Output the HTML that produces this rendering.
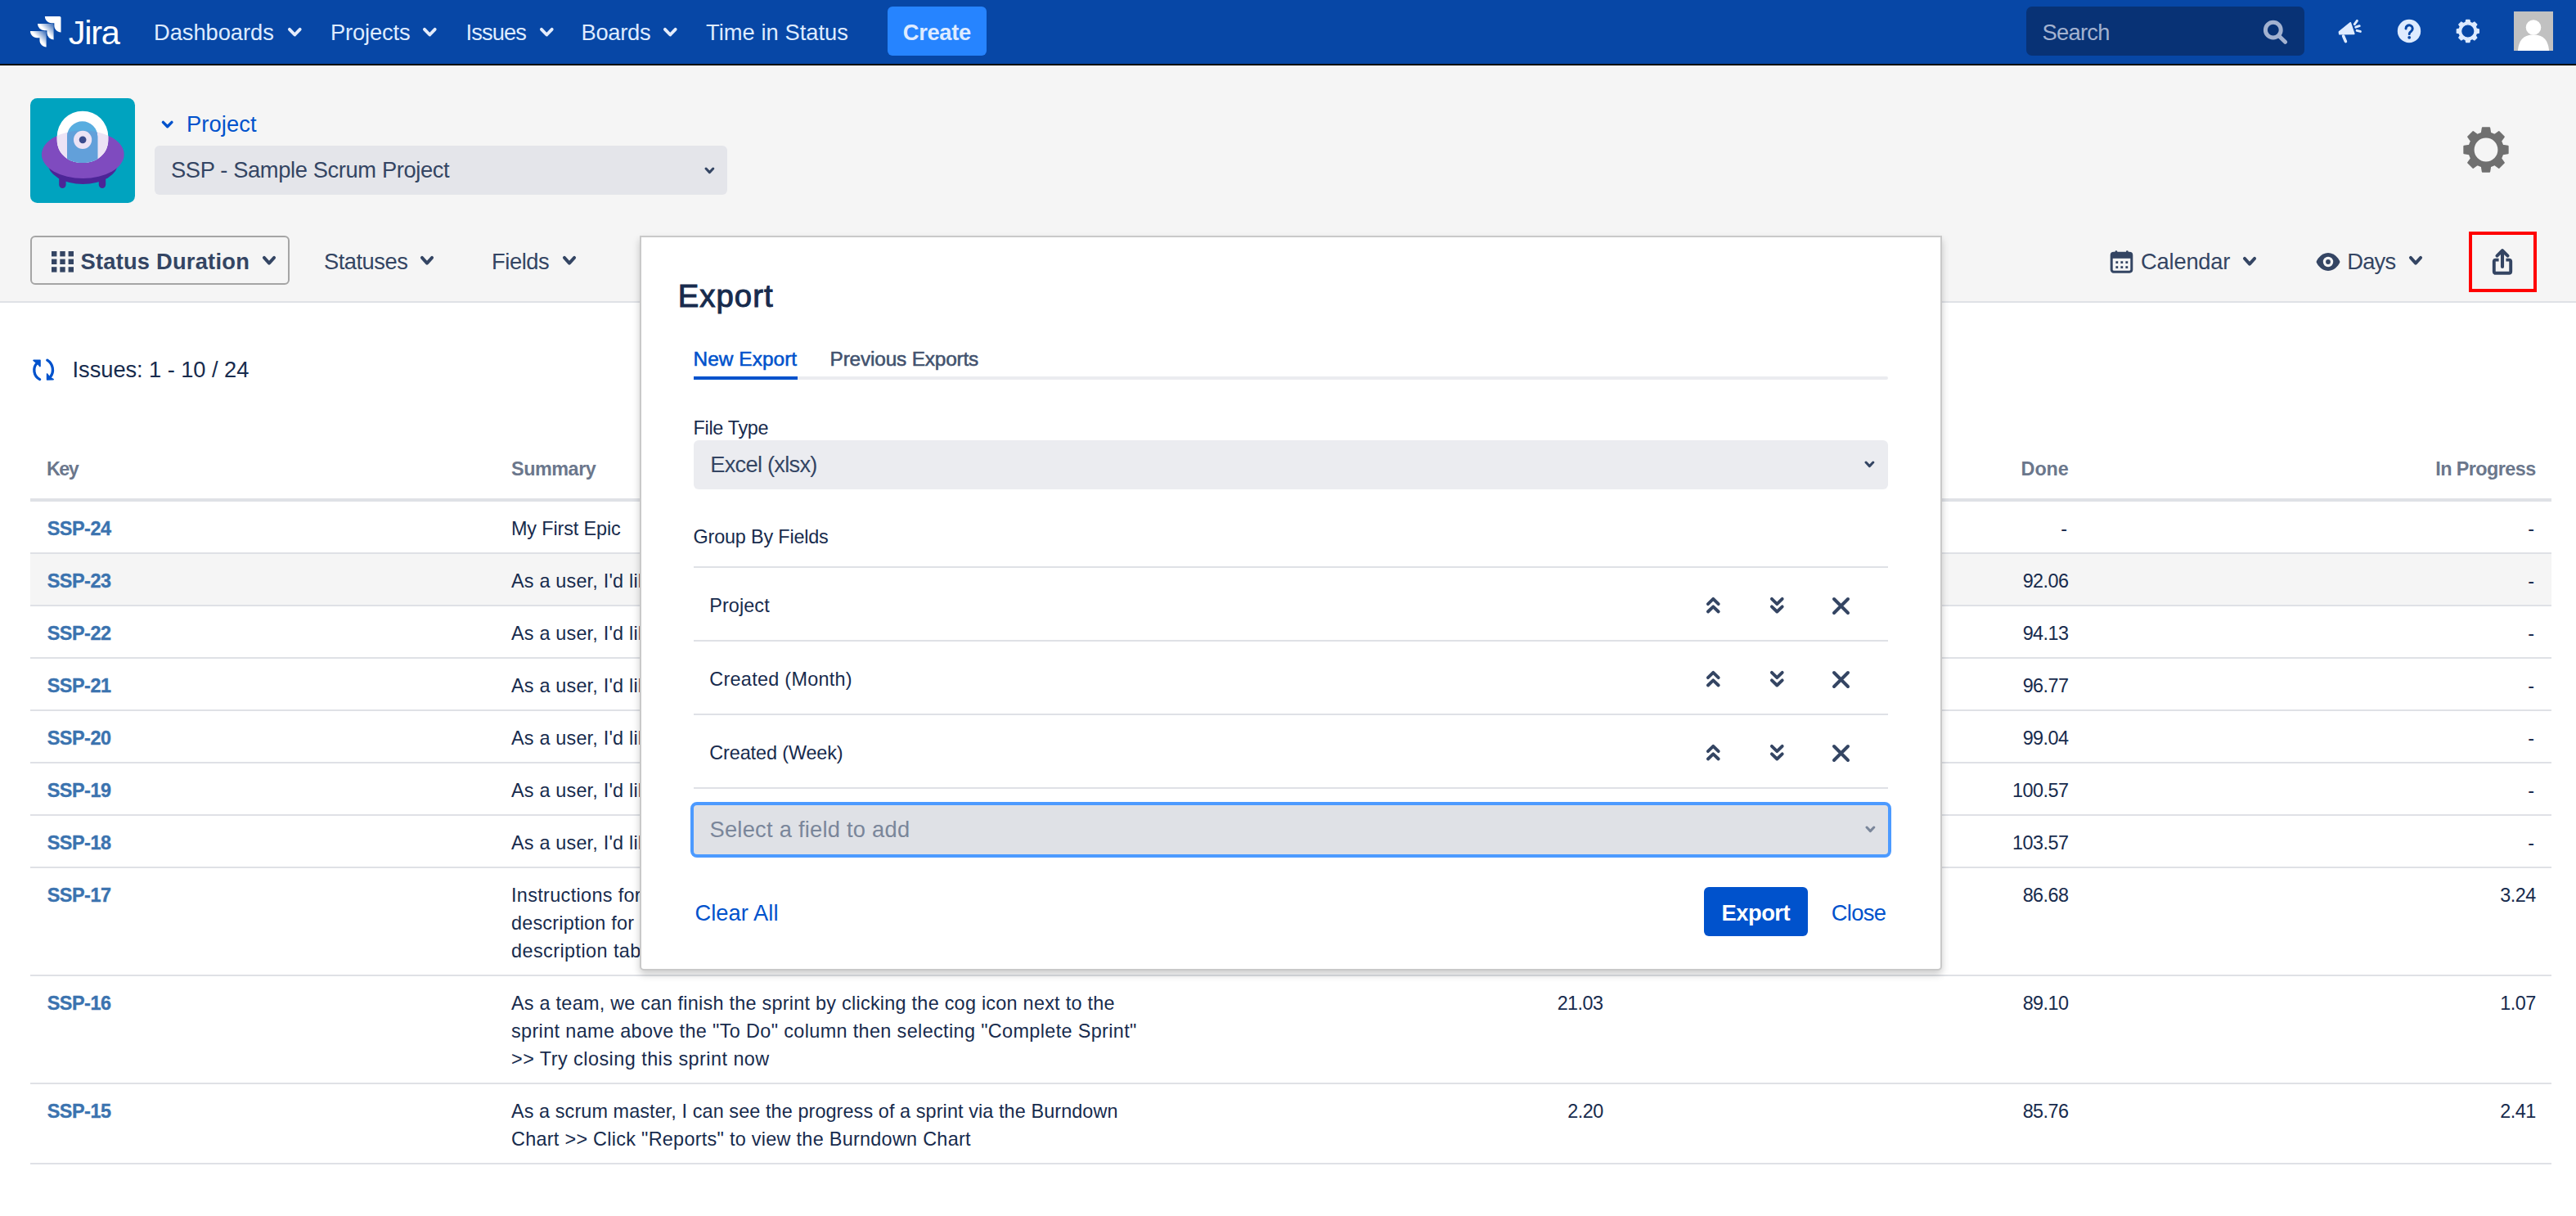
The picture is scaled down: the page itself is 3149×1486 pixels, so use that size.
<!DOCTYPE html>
<html lang="en">
<head>
<meta charset="utf-8">
<title>Time in Status - Jira</title>
<style>
*{box-sizing:border-box;margin:0;padding:0}
html,body{width:3149px;height:1486px;overflow:hidden;background:#fff}
body{position:relative;font-family:"Liberation Sans",sans-serif;color:#172b4d;font-size:24px;-webkit-font-smoothing:antialiased}
a{text-decoration:none;color:inherit}
.a{position:absolute;white-space:pre}
.ic{position:absolute;display:block;overflow:visible}
span{white-space:pre}

.nav{position:absolute;left:0;top:0;width:3149px;height:80px;background:#0747a6;border-bottom:2px solid #000}
.create{position:absolute;left:1084.5px;top:8px;width:121.5px;height:60px;background:#2684ff;border-radius:6px}
.search{position:absolute;left:2477px;top:8px;width:340px;height:60px;background:#083275;border-radius:7px}
.uav{position:absolute;left:3073px;top:14px;width:48px;height:48px}
.hdr{position:absolute;left:0;top:80px;width:3149px;height:290px;background:#f5f5f5;border-bottom:2px solid #dfe1e6}
.hdr>*{margin-top:-80px}
.psel{position:absolute;left:189px;top:178px;width:700px;height:60px;background:#e4e5ea;border-radius:6px}
.sdbtn{position:absolute;left:37px;top:288px;width:317px;height:60px;border:2px solid #a5a5a5;border-radius:6px;background:#f5f5f5}
.redbox{position:absolute;left:3018px;top:283px;width:83px;height:74px;border:4px solid #ff0000}
.grid{position:absolute;left:37px;top:545px;width:3082px;table-layout:fixed;border-collapse:collapse;font-size:23.4px;line-height:34px}
.grid th{height:66px;padding:10.5px 20px 0;vertical-align:top;text-align:left;border-bottom:4px solid #dfe1e6;color:#6b778c;font-weight:400}
.grid td{padding:16px 20px 12px;vertical-align:top;border-bottom:2px solid #dfe1e6;color:#172b4d}
.grid .n{text-align:right;padding-right:19.4px}
.grid .k{padding-left:20.7px}
.grid .k a{color:#3b73af}
.grid tr.hov td{background:#f5f5f5}
.modal{position:absolute;left:782px;top:288px;width:1592px;height:898px;background:#fff;border:2px solid #c9c9c9;border-radius:0 0 5px 5px;box-shadow:0 5px 10px rgba(0,0,0,.2)}
.tabline{position:absolute;left:848px;top:460px;width:1460px;height:4px;background:#ebecf0;border-radius:2px}
.tabsel{position:absolute;left:848px;top:460px;width:127px;height:4px;background:#0052cc}
.sel1{position:absolute;left:848px;top:538px;width:1460px;height:60px;background:#ebecf0;border-radius:6px}
.hl{position:absolute;left:848px;width:1460px;height:2px;background:#dfe1e6}
.sel2{position:absolute;left:844px;top:980px;width:1468px;height:68px;background:#dfe1e6;border:4px solid #4c9aff;border-radius:8px}
.expbtn{position:absolute;left:2083px;top:1084px;width:127px;height:60px;background:#0052cc;border-radius:6px}
h2{font-weight:400}
.modal>*{margin-left:-784px;margin-top:-290px}
</style>
</head>
<body>

<nav class="nav">
<svg class="ic" style="left:37px;top:20px" width="37.5" height="37.5" viewBox="2 2 20 20">
<defs>
<linearGradient id="jg1" x1="100%" y1="2%" x2="52%" y2="48%"><stop offset="0.15" stop-color="#fff" stop-opacity="0.3"/><stop offset="1" stop-color="#fff"/></linearGradient>
</defs>
<path fill="#fff" d="M11.53 2c0 2.4 1.97 4.35 4.35 4.35h1.78v1.7c0 2.4 1.94 4.34 4.34 4.35V2.84a.84.84 0 0 0-.84-.84h-9.63z"/>
<path fill="url(#jg1)" d="M6.77 6.8a4.362 4.362 0 0 0 4.34 4.34h1.8v1.72a4.362 4.362 0 0 0 4.34 4.34V7.63a.841.841 0 0 0-.83-.83H6.77z"/>
<path fill="url(#jg1)" d="M2 11.6c0 2.4 1.95 4.34 4.35 4.34h1.78v1.72c.01 2.39 1.95 4.33 4.34 4.34v-9.57a.84.84 0 0 0-.84-.84L2 11.6z"/>
</svg>
<div class="a" style="left:83.8px;top:18.5px;line-height:41.5px;color:#fff;"><span style="font-size:41.5px;font-weight:400;letter-spacing:-1.27px">Jira</span></div>
<a class="a" style="left:188.0px;top:26.2px;line-height:27.3px;color:#deebff;"><span style="font-size:27.3px;font-weight:400;letter-spacing:-0.04px">Dashboards</span></a><svg class="ic" style="left:349.7px;top:31.5px" width="20.6" height="14.4" viewBox="0 0 20.6 14.4"><path d="M3.9 3.9 L10.30 10.5 L16.7 3.9" fill="none" stroke="#e4ecfb" stroke-opacity="1" stroke-width="3.9" stroke-linecap="round" stroke-linejoin="round"/></svg>
<a class="a" style="left:404.0px;top:26.2px;line-height:27.3px;color:#deebff;"><span style="font-size:27.3px;font-weight:400;letter-spacing:-0.13px">Projects</span></a><svg class="ic" style="left:515.2px;top:31.5px" width="20.6" height="14.4" viewBox="0 0 20.6 14.4"><path d="M3.9 3.9 L10.30 10.5 L16.7 3.9" fill="none" stroke="#e4ecfb" stroke-opacity="1" stroke-width="3.9" stroke-linecap="round" stroke-linejoin="round"/></svg>
<a class="a" style="left:569.5px;top:26.2px;line-height:27.3px;color:#deebff;"><span style="font-size:27.3px;font-weight:400;letter-spacing:-0.89px">Issues</span></a><svg class="ic" style="left:657.7px;top:31.5px" width="20.6" height="14.4" viewBox="0 0 20.6 14.4"><path d="M3.9 3.9 L10.30 10.5 L16.7 3.9" fill="none" stroke="#e4ecfb" stroke-opacity="1" stroke-width="3.9" stroke-linecap="round" stroke-linejoin="round"/></svg>
<a class="a" style="left:710.5px;top:26.2px;line-height:27.3px;color:#deebff;"><span style="font-size:27.3px;font-weight:400;letter-spacing:-0.29px">Boards</span></a><svg class="ic" style="left:809.2px;top:31.5px" width="20.6" height="14.4" viewBox="0 0 20.6 14.4"><path d="M3.9 3.9 L10.30 10.5 L16.7 3.9" fill="none" stroke="#e4ecfb" stroke-opacity="1" stroke-width="3.9" stroke-linecap="round" stroke-linejoin="round"/></svg>
<a class="a" style="left:863.0px;top:26.2px;line-height:27.3px;color:#deebff;"><span style="font-size:27.3px;font-weight:400;letter-spacing:0.04px">Time in Status</span></a>
<a class="create"></a>
<div class="a" style="left:1103.8px;top:26.1px;line-height:27.3px;color:#deebff;"><span style="font-size:27.3px;font-weight:700;letter-spacing:-0.33px">Create</span></div>
<div class="search"></div>
<div class="a" style="left:2496.5px;top:26.2px;line-height:27.3px;color:#a3b2d0;"><span style="font-size:27.3px;font-weight:400;letter-spacing:-0.71px">Search</span></div>
<svg class="ic" style="left:2760px;top:20px" width="40" height="40" viewBox="0 0 40 40"><circle cx="18.8" cy="16.7" r="9.4" fill="none" stroke="#a3b2d0" stroke-width="5"/><path d="M26 24 L33.5 31.3" stroke="#a3b2d0" stroke-width="5" stroke-linecap="round"/></svg>
<svg class="ic" style="left:2850px;top:20px" width="40" height="40" viewBox="2850 20 40 40" fill="#deebff" stroke="#deebff">
<path d="M2859.6 39 L2873.2 28 L2877.6 41.2 L2860 41.6 Z" stroke-width="2" stroke-linejoin="round"/>
<path d="M2864.6 44 L2867.4 50.6" stroke-width="3.6" stroke-linecap="round"/>
<path d="M2878.3 29.6 L2881.4 25.4 M2879.8 33.2 L2884.2 31.7 M2881.2 37.4 L2885.4 38.4" stroke-width="3" stroke-linecap="round"/>
</svg>
<svg class="ic" style="left:2930px;top:23px" width="30" height="30" viewBox="0 0 30 30"><circle cx="15" cy="15" r="14.2" fill="#deebff"/><path d="M11 11.9 a4.1 4.1 0 1 1 6.5 3.3 c-1.6 1.1 -2.3 1.8 -2.3 3.4" fill="none" stroke="#0747a6" stroke-width="3" stroke-linecap="round"/><circle cx="15.2" cy="22.8" r="1.9" fill="#0747a6"/></svg>
<svg class="ic" style="left:3001px;top:22px" width="32" height="32" viewBox="0 0 32 32"><path fill="#deebff" fill-rule="evenodd" stroke="#deebff" stroke-width="1.2" stroke-linejoin="round" d="M12.98 5.37 L13.66 2.47 L17.94 2.47 L18.62 5.37 L21.32 6.49 L23.85 4.92 L26.88 7.95 L25.31 10.48 L26.43 13.18 L29.33 13.86 L29.33 18.14 L26.43 18.82 L25.31 21.52 L26.88 24.05 L23.85 27.08 L21.32 25.51 L18.62 26.63 L17.94 29.53 L13.66 29.53 L12.98 26.63 L10.28 25.51 L7.75 27.08 L4.72 24.05 L6.29 21.52 L5.17 18.82 L2.27 18.14 L2.27 13.86 L5.17 13.18 L6.29 10.48 L4.72 7.95 L7.75 4.92 L10.28 6.49Z M7.60 16.00 a8.2 8.2 0 1 0 16.4 0 a8.2 8.2 0 1 0 -16.4 0Z"/></svg>
<div class="uav"><svg width="48" height="48" viewBox="0 0 48 48"><rect width="48" height="48" fill="#c1c1c1"/><circle cx="24" cy="19.5" r="9.3" fill="#fff"/><path d="M5 48 C6 33 14 28.5 24 28.5 C34 28.5 42 33 43 48 Z" fill="#fff"/></svg></div>
</nav>

<header class="hdr">
<svg class="ic" style="left:37px;top:120px" width="128" height="128" viewBox="0 0 128 128">
<defs>
<clipPath id="dome"><path d="M32.7 47 A31.3 31.3 0 0 1 95.3 47 L95.3 51 C95.3 69 80 79 64 79 C48 79 32.7 69 32.7 51 Z"/></clipPath>
<clipPath id="sau"><ellipse cx="64.3" cy="68.7" rx="50.4" ry="29.3"/></clipPath>
</defs>
<rect width="128" height="128" rx="8.5" fill="#00a3bf"/>
<rect x="35.2" y="90" width="8.4" height="19.9" rx="4.2" fill="#4c2597"/>
<rect x="83.8" y="90" width="8.4" height="19.9" rx="4.2" fill="#4c2597"/>
<ellipse cx="64.3" cy="79" rx="43" ry="26" fill="#4c2597"/>
<ellipse cx="64.3" cy="68.7" rx="50.4" ry="29.3" fill="#7f4bbf"/>
<g clip-path="url(#dome)">
<rect x="30" y="10" width="70" height="72" fill="#fff"/>
<g clip-path="url(#sau)"><rect x="30" y="10" width="70" height="72" fill="#ece3f5"/></g>
<path d="M45 82 V47 A18.6 18.6 0 0 1 82.3 47 V82 Z" fill="#58ade0"/>
<g clip-path="url(#sau)"><path d="M45 82 V47 A18.6 18.6 0 0 1 82.3 47 V82 Z" fill="#62a0da"/></g>
</g>
<circle cx="64.1" cy="50.8" r="11.1" fill="#ece3f5"/>
<circle cx="64.1" cy="50.8" r="4.4" fill="#3b4c8e"/>
</svg>
<svg class="ic" style="left:196.1px;top:145.9px" width="17.4" height="12.2" viewBox="0 0 17.4 12.2"><path d="M3.4 3.4 L8.70 8.8 L14.0 3.4" fill="none" stroke="#0052cc" stroke-opacity="1" stroke-width="3.4" stroke-linecap="round" stroke-linejoin="round"/></svg>
<a class="a" style="left:228.0px;top:138.4px;line-height:27.3px;color:#0052cc;"><span style="font-size:27.3px;font-weight:400;letter-spacing:0.10px">Project</span></a>
<div class="psel"></div>
<div class="a" style="left:209.0px;top:194.4px;line-height:27.3px;color:#344563;"><span style="font-size:27.3px;font-weight:400;letter-spacing:-0.37px">SSP - Sample Scrum Project</span></div>
<svg class="ic" style="left:859.6px;top:202.5px" width="14.8" height="10.6" viewBox="0 0 14.8 10.6"><path d="M3.0 3.0 L7.40 7.6 L11.8 3.0" fill="none" stroke="#344563" stroke-opacity="1" stroke-width="3" stroke-linecap="round" stroke-linejoin="round"/></svg>
<svg class="ic" style="left:3009px;top:153px" width="60" height="60" viewBox="0 0 60 60"><path fill="#707070" fill-rule="evenodd" stroke="#707070" stroke-width="2" stroke-linejoin="round" d="M24.78 9.66 L25.78 3.33 L34.22 3.33 L35.22 9.66 L40.69 11.92 L45.87 8.16 L51.84 14.13 L48.08 19.31 L50.34 24.78 L56.67 25.78 L56.67 34.22 L50.34 35.22 L48.08 40.69 L51.84 45.87 L45.87 51.84 L40.69 48.08 L35.22 50.34 L34.22 56.67 L25.78 56.67 L24.78 50.34 L19.31 48.08 L14.13 51.84 L8.16 45.87 L11.92 40.69 L9.66 35.22 L3.33 34.22 L3.33 25.78 L9.66 24.78 L11.92 19.31 L8.16 14.13 L14.13 8.16 L19.31 11.92Z M14.60 30.00 a15.4 15.4 0 1 0 30.8 0 a15.4 15.4 0 1 0 -30.8 0Z"/></svg>

<div class="sdbtn"></div>
<svg class="ic" style="left:62.5px;top:306.5px" width="27" height="26" viewBox="0 0 27 26" fill="#344563"><rect x="0" y="0" width="6.4" height="6.4"/><rect x="10.3" y="0" width="6.4" height="6.4"/><rect x="20.6" y="0" width="6.4" height="6.4"/><rect x="0" y="9.6" width="6.4" height="6.4"/><rect x="10.3" y="9.6" width="6.4" height="6.4"/><rect x="20.6" y="9.6" width="6.4" height="6.4"/><rect x="0" y="19.2" width="6.4" height="6.4"/><rect x="10.3" y="19.2" width="6.4" height="6.4"/><rect x="20.6" y="19.2" width="6.4" height="6.4"/></svg>
<div class="a" style="left:98.5px;top:305.9px;line-height:27.3px;color:#344563;"><span style="font-size:27.3px;font-weight:700;letter-spacing:0.22px">Status Duration</span></div>
<svg class="ic" style="left:318.5px;top:310.8px" width="20.0" height="14.5" viewBox="0 0 20.0 14.5"><path d="M3.9 3.9 L10.00 10.6 L16.1 3.9" fill="none" stroke="#344563" stroke-opacity="1" stroke-width="3.9" stroke-linecap="round" stroke-linejoin="round"/></svg>
<div class="a" style="left:396.0px;top:305.9px;line-height:27.3px;color:#344563;"><span style="font-size:27.3px;font-weight:400;letter-spacing:-0.49px">Statuses</span></div><svg class="ic" style="left:511.5px;top:311.2px" width="20.0" height="14.5" viewBox="0 0 20.0 14.5"><path d="M3.9 3.9 L10.00 10.6 L16.1 3.9" fill="none" stroke="#344563" stroke-opacity="1" stroke-width="3.9" stroke-linecap="round" stroke-linejoin="round"/></svg>
<div class="a" style="left:601.0px;top:305.9px;line-height:27.3px;color:#344563;"><span style="font-size:27.3px;font-weight:400;letter-spacing:-0.43px">Fields</span></div><svg class="ic" style="left:685.5px;top:311.2px" width="20.0" height="14.5" viewBox="0 0 20.0 14.5"><path d="M3.9 3.9 L10.00 10.6 L16.1 3.9" fill="none" stroke="#344563" stroke-opacity="1" stroke-width="3.9" stroke-linecap="round" stroke-linejoin="round"/></svg>

<svg class="ic" style="left:2579px;top:305px" width="29" height="29" viewBox="0 0 29 29"><rect x="2.2" y="4.2" width="24.6" height="23" rx="2.6" fill="none" stroke="#344563" stroke-width="3"/><rect x="2.2" y="4.2" width="24.6" height="6.6" fill="#344563"/><rect x="6.6" y="1.2" width="2.6" height="6" rx="1" fill="#344563"/><rect x="20" y="1.2" width="2.6" height="6" rx="1" fill="#344563"/><g fill="#344563"><rect x="7.4" y="14.2" width="2.8" height="2.8"/><rect x="13.4" y="14.2" width="2.8" height="2.8"/><rect x="19.4" y="14.2" width="2.8" height="2.8"/><rect x="7.4" y="20.2" width="2.8" height="2.8"/><rect x="13.4" y="20.2" width="2.8" height="2.8"/><rect x="19.4" y="20.2" width="2.8" height="2.8"/></g></svg>
<div class="a" style="left:2617.0px;top:305.9px;line-height:27.3px;color:#344563;"><span style="font-size:27.3px;font-weight:400;letter-spacing:-0.19px">Calendar</span></div><svg class="ic" style="left:2740.3px;top:312.2px" width="20.0" height="14.5" viewBox="0 0 20.0 14.5"><path d="M3.9 3.9 L10.00 10.6 L16.1 3.9" fill="none" stroke="#344563" stroke-opacity="1" stroke-width="3.9" stroke-linecap="round" stroke-linejoin="round"/></svg>
<svg class="ic" style="left:2831px;top:308px" width="30" height="24" viewBox="0 0 30 24"><path d="M0.6 12 C0.6 10.5 6 1 15 1 C24 1 29.4 10.5 29.4 12 C29.4 13.5 24 23 15 23 C6 23 0.6 13.5 0.6 12 Z" fill="#344563"/><circle cx="15" cy="12" r="6.2" fill="#f5f5f5"/><circle cx="15" cy="12" r="2.9" fill="#344563"/></svg>
<div class="a" style="left:2869.2px;top:305.9px;line-height:27.3px;color:#344563;"><span style="font-size:27.3px;font-weight:400;letter-spacing:-0.73px">Days</span></div><svg class="ic" style="left:2943.2px;top:310.8px" width="20.0" height="14.5" viewBox="0 0 20.0 14.5"><path d="M3.9 3.9 L10.00 10.6 L16.1 3.9" fill="none" stroke="#344563" stroke-opacity="1" stroke-width="3.9" stroke-linecap="round" stroke-linejoin="round"/></svg>
<div class="redbox"></div>
<svg class="ic" style="left:3045px;top:302px" width="28" height="36" viewBox="0 0 28 36" fill="none" stroke="#344563" stroke-width="3.9" stroke-linejoin="round"><path d="M9.6 15.6 H5.8 Q3.8 15.6 3.8 17.6 V29.8 Q3.8 31.8 5.8 31.8 H22.2 Q24.2 31.8 24.2 29.8 V17.6 Q24.2 15.6 22.2 15.6 H18.4"/><path stroke-linecap="round" stroke-width="4.1" d="M14 24 V4.6 M7.5 10.6 L14 4.1 L20.5 10.6"/></svg>
</header>

<main>
<svg class="ic" style="left:36px;top:436px" width="34" height="32" viewBox="36 436 34 32"><g fill="none" stroke="#0052cc" stroke-width="3.3" stroke-linecap="round"><path d="M48.6 463.6 A12.6 12.6 0 0 1 45.6 443.4"/><path d="M57.8 440.2 A14 14 0 0 1 61.6 460.6"/></g><g fill="#0052cc" stroke="#0052cc" stroke-width="1.6" stroke-linejoin="round"><path d="M41 440.4 L49 440.2 L49 447.6 L46.4 444.8 Z"/><path d="M57.6 457 L57.6 464 L65.2 463.6 L60.6 461 Z"/></g></svg>
<div class="a" style="left:88.6px;top:437.9px;line-height:27.3px;color:#172b4d;"><span style="font-size:27.3px;font-weight:400;letter-spacing:-0.07px">Issues: 1 - 10 / 24</span></div>
<table class="grid">
<colgroup><col style="width:568px"><col style="width:806px"><col style="width:568px"><col style="width:569px"><col style="width:571px"></colgroup>
<thead><tr><th><span style="font-size:23.4px;font-weight:700;letter-spacing:-1.54px">Key</span></th><th><span style="font-size:23.4px;font-weight:700;letter-spacing:-0.47px">Summary</span></th><th class="n"><span style="font-size:23.4px;font-weight:700;letter-spacing:-0.51px">To Do</span></th><th class="n"><span style="font-size:23.4px;font-weight:700;letter-spacing:-0.12px">Done</span></th><th class="n"><span style="font-size:23.4px;font-weight:700;letter-spacing:-0.58px">In Progress</span></th></tr></thead>
<tbody>
<tr><td class="k"><a><span style="font-size:23.4px;font-weight:700;letter-spacing:-0.47px;-webkit-text-stroke:0.35px">SSP-24</span></a></td><td><span style="font-size:23.4px;font-weight:400;letter-spacing:-0.12px">My First Epic</span></td><td class="n"><span style="font-size:23.4px;font-weight:400;letter-spacing:1.64px">-</span></td><td class="n"><span style="font-size:23.4px;font-weight:400;letter-spacing:1.64px">-</span></td><td class="n"><span style="font-size:23.4px;font-weight:400;letter-spacing:1.64px">-</span></td></tr>
<tr class="hov"><td class="k"><a><span style="font-size:23.4px;font-weight:700;letter-spacing:-0.47px;-webkit-text-stroke:0.35px">SSP-23</span></a></td><td><span style="font-size:23.4px;font-weight:400;letter-spacing:0.20px">As a user, I'd like a historical story to show in reports</span></td><td class="n"><span style="font-size:23.4px;font-weight:400;letter-spacing:-0.56px">8.01</span></td><td class="n"><span style="font-size:23.4px;font-weight:400;letter-spacing:-0.51px">92.06</span></td><td class="n"><span style="font-size:23.4px;font-weight:400;letter-spacing:1.64px">-</span></td></tr>
<tr><td class="k"><a><span style="font-size:23.4px;font-weight:700;letter-spacing:-0.47px;-webkit-text-stroke:0.35px">SSP-22</span></a></td><td><span style="font-size:23.4px;font-weight:400;letter-spacing:0.20px">As a user, I'd like a historical story to show in reports</span></td><td class="n"><span style="font-size:23.4px;font-weight:400;letter-spacing:-0.56px">6.94</span></td><td class="n"><span style="font-size:23.4px;font-weight:400;letter-spacing:-0.51px">94.13</span></td><td class="n"><span style="font-size:23.4px;font-weight:400;letter-spacing:1.64px">-</span></td></tr>
<tr><td class="k"><a><span style="font-size:23.4px;font-weight:700;letter-spacing:-0.47px;-webkit-text-stroke:0.35px">SSP-21</span></a></td><td><span style="font-size:23.4px;font-weight:400;letter-spacing:0.20px">As a user, I'd like a historical story to show in reports</span></td><td class="n"><span style="font-size:23.4px;font-weight:400;letter-spacing:-0.56px">4.30</span></td><td class="n"><span style="font-size:23.4px;font-weight:400;letter-spacing:-0.51px">96.77</span></td><td class="n"><span style="font-size:23.4px;font-weight:400;letter-spacing:1.64px">-</span></td></tr>
<tr><td class="k"><a><span style="font-size:23.4px;font-weight:700;letter-spacing:-0.47px;-webkit-text-stroke:0.35px">SSP-20</span></a></td><td><span style="font-size:23.4px;font-weight:400;letter-spacing:0.20px">As a user, I'd like a historical story to show in reports</span></td><td class="n"><span style="font-size:23.4px;font-weight:400;letter-spacing:-0.56px">2.03</span></td><td class="n"><span style="font-size:23.4px;font-weight:400;letter-spacing:-0.51px">99.04</span></td><td class="n"><span style="font-size:23.4px;font-weight:400;letter-spacing:1.64px">-</span></td></tr>
<tr><td class="k"><a><span style="font-size:23.4px;font-weight:700;letter-spacing:-0.47px;-webkit-text-stroke:0.35px">SSP-19</span></a></td><td><span style="font-size:23.4px;font-weight:400;letter-spacing:0.20px">As a user, I'd like a historical story to show in reports</span></td><td class="n"><span style="font-size:23.4px;font-weight:400;letter-spacing:-0.56px">1.50</span></td><td class="n"><span style="font-size:23.4px;font-weight:400;letter-spacing:-0.47px">100.57</span></td><td class="n"><span style="font-size:23.4px;font-weight:400;letter-spacing:1.64px">-</span></td></tr>
<tr><td class="k"><a><span style="font-size:23.4px;font-weight:700;letter-spacing:-0.47px;-webkit-text-stroke:0.35px">SSP-18</span></a></td><td><span style="font-size:23.4px;font-weight:400;letter-spacing:0.20px">As a user, I'd like a historical story to show in reports</span></td><td class="n"><span style="font-size:23.4px;font-weight:400;letter-spacing:-0.56px">0.50</span></td><td class="n"><span style="font-size:23.4px;font-weight:400;letter-spacing:-0.47px">103.57</span></td><td class="n"><span style="font-size:23.4px;font-weight:400;letter-spacing:1.64px">-</span></td></tr>
<tr><td class="k"><a><span style="font-size:23.4px;font-weight:700;letter-spacing:-0.47px;-webkit-text-stroke:0.35px">SSP-17</span></a></td><td><span style="font-size:23.4px;font-weight:400;letter-spacing:0.35px">Instructions for deleting this sample board and project are in the</span><br><span style="font-size:23.4px;font-weight:400;letter-spacing:0.22px">description for this issue &gt;&gt; Click the "SSP-17" link and read the</span><br><span style="font-size:23.4px;font-weight:400;letter-spacing:0.44px">description tab of the detail view for more</span></td><td class="n"><span style="font-size:23.4px;font-weight:400;letter-spacing:-0.51px">14.15</span></td><td class="n"><span style="font-size:23.4px;font-weight:400;letter-spacing:-0.51px">86.68</span></td><td class="n"><span style="font-size:23.4px;font-weight:400;letter-spacing:-0.56px">3.24</span></td></tr>
<tr><td class="k"><a><span style="font-size:23.4px;font-weight:700;letter-spacing:-0.47px;-webkit-text-stroke:0.35px">SSP-16</span></a></td><td><span style="font-size:23.4px;font-weight:400;letter-spacing:0.26px">As a team, we can finish the sprint by clicking the cog icon next to the</span><br><span style="font-size:23.4px;font-weight:400;letter-spacing:0.37px">sprint name above the "To Do" column then selecting "Complete Sprint"</span><br><span style="font-size:23.4px;font-weight:400;letter-spacing:0.47px">&gt;&gt; Try closing this sprint now</span></td><td class="n"><span style="font-size:23.4px;font-weight:400;letter-spacing:-0.51px">21.03</span></td><td class="n"><span style="font-size:23.4px;font-weight:400;letter-spacing:-0.51px">89.10</span></td><td class="n"><span style="font-size:23.4px;font-weight:400;letter-spacing:-0.56px">1.07</span></td></tr>
<tr><td class="k"><a><span style="font-size:23.4px;font-weight:700;letter-spacing:-0.47px;-webkit-text-stroke:0.35px">SSP-15</span></a></td><td><span style="font-size:23.4px;font-weight:400;letter-spacing:0.10px">As a scrum master, I can see the progress of a sprint via the Burndown</span><br><span style="font-size:23.4px;font-weight:400;letter-spacing:0.29px">Chart &gt;&gt; Click "Reports" to view the Burndown Chart</span></td><td class="n"><span style="font-size:23.4px;font-weight:400;letter-spacing:-0.56px">2.20</span></td><td class="n"><span style="font-size:23.4px;font-weight:400;letter-spacing:-0.51px">85.76</span></td><td class="n"><span style="font-size:23.4px;font-weight:400;letter-spacing:-0.56px">2.41</span></td></tr>
</tbody>
</table>
</main>

<section class="modal" role="dialog">
<h2 class="a" style="left:828.7px;top:343.4px;line-height:38.3px;color:#172b4d;"><span style="font-size:38.3px;font-weight:400;letter-spacing:1.05px;-webkit-text-stroke:1.0px">Export</span></h2>
<a class="a" style="left:847.6px;top:427.2px;line-height:24.4px;color:#0052cc;"><span style="font-size:24.4px;font-weight:400;letter-spacing:0.05px;-webkit-text-stroke:0.55px">New Export</span></a>
<a class="a" style="left:1014.6px;top:427.2px;line-height:24.4px;color:#42526e;"><span style="font-size:24.4px;font-weight:400;letter-spacing:-0.18px;-webkit-text-stroke:0.55px">Previous Exports</span></a>
<div class="tabline"></div><div class="tabsel"></div>
<label class="a" style="left:847.6px;top:511.2px;line-height:23.4px;color:#172b4d;"><span style="font-size:23.4px;font-weight:400;letter-spacing:-0.32px">File Type</span></label>
<div class="sel1"></div>
<div class="a" style="left:868.3px;top:553.9px;line-height:27.3px;color:#344563;"><span style="font-size:27.3px;font-weight:400;letter-spacing:-0.77px">Excel (xlsx)</span></div>
<svg class="ic" style="left:2278.3px;top:562.3px" width="14.8" height="10.6" viewBox="0 0 14.8 10.6"><path d="M3.0 3.0 L7.40 7.6 L11.8 3.0" fill="none" stroke="#344563" stroke-opacity="1" stroke-width="3" stroke-linecap="round" stroke-linejoin="round"/></svg>
<label class="a" style="left:847.5px;top:644.4px;line-height:23.4px;color:#172b4d;"><span style="font-size:23.4px;font-weight:400;letter-spacing:-0.17px">Group By Fields</span></label>
<div class="hl" style="top:692px"></div>
<div class="a" style="left:867.3px;top:728.0px;line-height:23.4px;color:#172b4d;"><span style="font-size:23.4px;font-weight:400;letter-spacing:0.09px">Project</span></div><svg class="ic" style="left:2083.7px;top:728.3px" width="20.6" height="23.4" viewBox="0 0 20.6 23.4"><path d="M3.9 10.1 L10.30 3.9 L16.700000000000003 10.1 M3.9 19.5 L10.30 13.3 L16.700000000000003 19.5" fill="none" stroke="#344563" stroke-width="3.9" stroke-linecap="round" stroke-linejoin="round"/></svg><svg class="ic" style="left:2161.7px;top:728.3px" width="20.6" height="23.4" viewBox="0 0 20.6 23.4"><path d="M3.9 3.9 L10.30 10.1 L16.700000000000003 3.9 M3.9 13.3 L10.30 19.5 L16.700000000000003 13.3" fill="none" stroke="#344563" stroke-width="3.9" stroke-linecap="round" stroke-linejoin="round"/></svg><svg class="ic" style="left:2237.5px;top:727.5px" width="25.0" height="25.0" viewBox="0 0 25.0 25.0"><path d="M4.0 4.0 L21.0 21.0 M21.0 4.0 L4.0 21.0" fill="none" stroke="#344563" stroke-width="4.0" stroke-linecap="round"/></svg>
<div class="hl" style="top:782px"></div>
<div class="a" style="left:867.3px;top:817.9px;line-height:23.4px;color:#172b4d;"><span style="font-size:23.4px;font-weight:400;letter-spacing:0.29px">Created (Month)</span></div><svg class="ic" style="left:2083.7px;top:818.3px" width="20.6" height="23.4" viewBox="0 0 20.6 23.4"><path d="M3.9 10.1 L10.30 3.9 L16.700000000000003 10.1 M3.9 19.5 L10.30 13.3 L16.700000000000003 19.5" fill="none" stroke="#344563" stroke-width="3.9" stroke-linecap="round" stroke-linejoin="round"/></svg><svg class="ic" style="left:2161.7px;top:818.3px" width="20.6" height="23.4" viewBox="0 0 20.6 23.4"><path d="M3.9 3.9 L10.30 10.1 L16.700000000000003 3.9 M3.9 13.3 L10.30 19.5 L16.700000000000003 13.3" fill="none" stroke="#344563" stroke-width="3.9" stroke-linecap="round" stroke-linejoin="round"/></svg><svg class="ic" style="left:2237.5px;top:817.5px" width="25.0" height="25.0" viewBox="0 0 25.0 25.0"><path d="M4.0 4.0 L21.0 21.0 M21.0 4.0 L4.0 21.0" fill="none" stroke="#344563" stroke-width="4.0" stroke-linecap="round"/></svg>
<div class="hl" style="top:872px"></div>
<div class="a" style="left:867.3px;top:907.9px;line-height:23.4px;color:#172b4d;"><span style="font-size:23.4px;font-weight:400;letter-spacing:-0.10px">Created (Week)</span></div><svg class="ic" style="left:2083.7px;top:908.3px" width="20.6" height="23.4" viewBox="0 0 20.6 23.4"><path d="M3.9 10.1 L10.30 3.9 L16.700000000000003 10.1 M3.9 19.5 L10.30 13.3 L16.700000000000003 19.5" fill="none" stroke="#344563" stroke-width="3.9" stroke-linecap="round" stroke-linejoin="round"/></svg><svg class="ic" style="left:2161.7px;top:908.3px" width="20.6" height="23.4" viewBox="0 0 20.6 23.4"><path d="M3.9 3.9 L10.30 10.1 L16.700000000000003 3.9 M3.9 13.3 L10.30 19.5 L16.700000000000003 13.3" fill="none" stroke="#344563" stroke-width="3.9" stroke-linecap="round" stroke-linejoin="round"/></svg><svg class="ic" style="left:2237.5px;top:907.5px" width="25.0" height="25.0" viewBox="0 0 25.0 25.0"><path d="M4.0 4.0 L21.0 21.0 M21.0 4.0 L4.0 21.0" fill="none" stroke="#344563" stroke-width="4.0" stroke-linecap="round"/></svg>
<div class="hl" style="top:962px"></div>
<div class="sel2"></div>
<div class="a" style="left:867.5px;top:1000.1px;line-height:27.3px;color:#7a869a;"><span style="font-size:27.3px;font-weight:400;letter-spacing:0.24px">Select a field to add</span></div>
<svg class="ic" style="left:2278.6px;top:1008.3px" width="14.8" height="10.6" viewBox="0 0 14.8 10.6"><path d="M3.0 3.0 L7.40 7.6 L11.8 3.0" fill="none" stroke="#7a869a" stroke-opacity="1" stroke-width="3" stroke-linecap="round" stroke-linejoin="round"/></svg>
<a class="a" style="left:849.5px;top:1101.9px;line-height:27.3px;color:#0052cc;"><span style="font-size:27.3px;font-weight:400;letter-spacing:0.04px">Clear All</span></a>
<div class="expbtn"></div>
<div class="a" style="left:2104.6px;top:1101.9px;line-height:27.3px;color:#fff;"><span style="font-size:27.3px;font-weight:700;letter-spacing:-0.51px">Export</span></div>
<a class="a" style="left:2238.8px;top:1101.9px;line-height:27.3px;color:#0052cc;"><span style="font-size:27.3px;font-weight:400;letter-spacing:-0.64px">Close</span></a>
</section>

</body>
</html>
